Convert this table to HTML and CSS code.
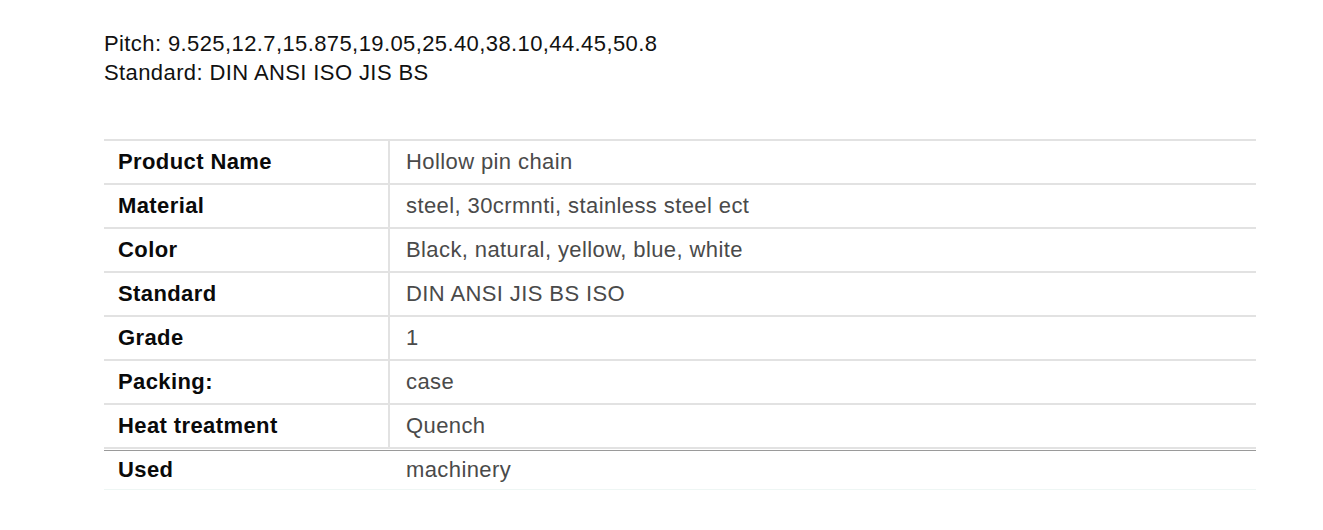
FILE: index.html
```html
<!DOCTYPE html>
<html lang="en">
<head>
<meta charset="utf-8">
<title>Hollow pin chain</title>
<link rel="stylesheet" href="styles.css">
</head>
<body>
<main class="page">
  <div class="intro">
    <p>Pitch: 9.525,12.7,15.875,19.05,25.40,38.10,44.45,50.8</p>
    <p>Standard: DIN ANSI ISO JIS BS</p>
  </div>
  <table class="spec">
    <tbody>
      <tr><th>Product Name</th><td>Hollow pin chain</td></tr>
      <tr><th>Material</th><td>steel, 30crmnti, stainless steel ect</td></tr>
      <tr><th>Color</th><td>Black, natural, yellow, blue, white</td></tr>
      <tr><th>Standard</th><td>DIN ANSI JIS BS ISO</td></tr>
      <tr><th>Grade</th><td>1</td></tr>
      <tr><th>Packing:</th><td>case</td></tr>
      <tr><th>Heat treatment</th><td>Quench</td></tr>
      <tr class="last"><th>Used</th><td>machinery</td></tr>
    </tbody>
  </table>
</main>
</body>
</html>
```
FILE: styles.css
```css
html, body {
  margin: 0;
  padding: 0;
  background: #ffffff;
}
.page {
  padding: 29px 0 0 104px;
  font-family: "Liberation Sans", Arial, sans-serif;
  color: #111;
  letter-spacing: 0.4px;
}
.intro p {
  margin: 0;
  font-size: 22px;
  line-height: 29px;
  color: #111;
}
.spec {
  margin-top: 52px;
  width: 1152px;
  border-collapse: separate;
  border-spacing: 0;
  font-size: 22px;
}
.spec th,
.spec td {
  height: 42px;
  padding: 0;
  border-top: 2px solid #e2e2e2;
  vertical-align: middle;
  text-align: left;
  line-height: 26px;
}
.spec th {
  width: 270px;
  padding-left: 14px;
  font-weight: bold;
  color: #0a0a0a;
  border-right: 2px solid #e2e2e2;
}
.spec td {
  padding-left: 16px;
  color: #4a4a4a;
}
.spec tr.last th,
.spec tr.last td {
  height: 38px;
  padding-top: 2px;
  border-right: none;
  box-shadow: inset 0 1px 0 #ffffff, inset 0 2px 0 #9a9a9a;
  border-bottom: 1px solid #eef6f4;
}
```
